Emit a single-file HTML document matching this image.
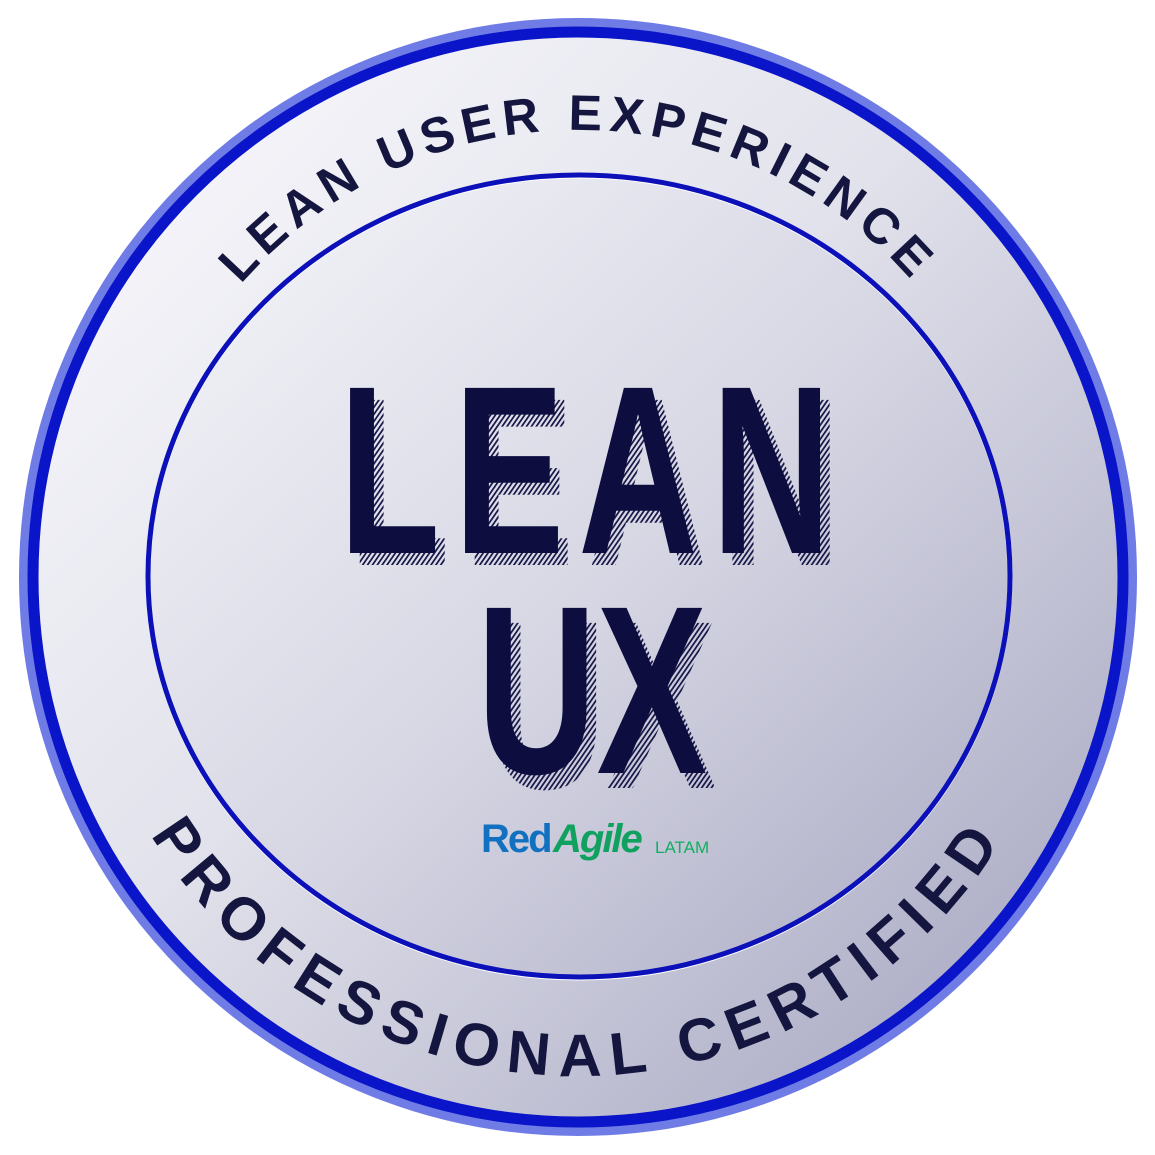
<!DOCTYPE html>
<html><head><meta charset="utf-8"><style>
html,body{margin:0;padding:0;background:#fff;width:1155px;height:1155px;overflow:hidden}
svg{display:block}
</style></head><body>
<svg width="1155" height="1155" viewBox="0 0 1155 1155" xmlns="http://www.w3.org/2000/svg">
<defs>
<linearGradient id="bg" x1="0" y1="0" x2="1" y2="1">
<stop offset="0" stop-color="#fbfbfe"/><stop offset="0.45" stop-color="#e2e2ec"/><stop offset="1" stop-color="#9fa0bc"/>
</linearGradient>
<linearGradient id="ib" x1="0" y1="0" x2="1" y2="1">
<stop offset="0" stop-color="#f6f6fa"/><stop offset="0.5" stop-color="#d8d8e5"/><stop offset="1" stop-color="#a9aac3"/>
</linearGradient>
<pattern id="hatch" width="5" height="5" patternUnits="userSpaceOnUse" patternTransform="rotate(45)">
<rect width="2.2" height="5" fill="#1a1a4a"/>
</pattern>
<path id="top" d="M 578 1020 A 445 445 0 1 1 578.1 1020"/>
<path id="bot" d="M 578 78 A 499 499 0 1 0 578.1 78"/>
</defs>
<circle cx="578" cy="577" r="545" fill="url(#bg)"/>
<circle cx="578" cy="577" r="550" fill="none" stroke="#6f7ce6" stroke-width="18"/>
<circle cx="578" cy="577" r="545" fill="none" stroke="#0a14c8" stroke-width="11"/>
<ellipse cx="579" cy="576" rx="428" ry="398" fill="url(#ib)"/>
<ellipse cx="579" cy="577" rx="431" ry="401" fill="none" stroke="#ffffff" stroke-width="5"/>
<ellipse cx="579" cy="576" rx="431" ry="401" fill="none" stroke="#0b10b8" stroke-width="5"/>
<g font-family="Liberation Sans, sans-serif" font-weight="bold" fill="#15163f" text-anchor="middle">
<text font-size="50" letter-spacing="7"><textPath href="#top" startOffset="50%">LEAN USER EXPERIENCE</textPath></text>
<text font-size="60" letter-spacing="10"><textPath href="#bot" startOffset="50%">PROFESSIONAL CERTIFIED</textPath></text>
</g>
<g font-family="Liberation Sans, sans-serif" font-weight="bold" text-anchor="middle">
<g transform="translate(592,0) scale(0.69,1) translate(-592,0)">
<g transform="translate(14,10)">
<text x="592" y="555" font-size="240" letter-spacing="20" fill="url(#hatch)">LEAN</text>
<text x="592" y="778" font-size="240" letter-spacing="0" fill="url(#hatch)">UX</text>
</g>
<text x="592" y="553" font-size="240" letter-spacing="20" fill="#0d0d40">LEAN</text>
<text x="592" y="773" font-size="240" letter-spacing="0" fill="#0d0d40">UX</text>
</g>
</g>
<g font-family="Liberation Sans, sans-serif" font-weight="bold" font-style="italic">
<text x="481" y="852" font-size="40" fill="#1270c0" font-style="normal" letter-spacing="-2">Red</text>
<text x="553" y="852" font-size="40" fill="#10a060" letter-spacing="-2">Agile</text>
<text x="655" y="853" font-size="17" fill="#10b060" font-weight="normal" font-style="normal">LATAM</text>
</g>
</svg>
</body></html>
